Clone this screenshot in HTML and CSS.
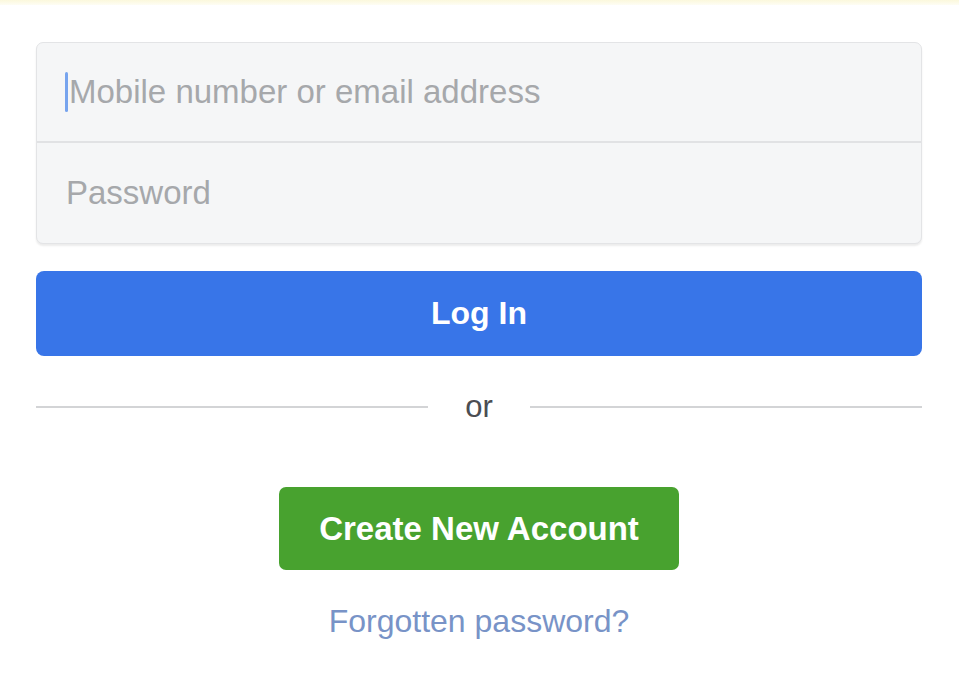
FILE: index.html
```html
<!DOCTYPE html>
<html lang="en">

<head>
    <link rel="stylesheet" href="styles.css">
</head>

<body>
    <div class="notice-strip"></div>
    <main class="login">
        <!-- credential fields -->
        <div class="fields">
            <div class="field field-active">
                <span class="caret"></span>
                <span class="placeholder">Mobile number or email address</span>
            </div>
            <div class="field">
                <span class="placeholder">Password</span>
            </div>
        </div>
        <button class="login-btn">Log In</button>
        <div class="divider">
            <span class="divider-line"></span>
            <span class="divider-text">or</span>
            <span class="divider-line"></span>
        </div>
        <button class="create-btn">Create New Account</button>
        <a class="forgot-link" href="#">Forgotten password?</a>
    </main>
</body>

</html>
```

FILE: styles.css
```css
body {
    margin: 0;
    background: #ffffff;
    font-family: "Liberation Sans", Arial, sans-serif;
}

.notice-strip {
    height: 5px;
    background: linear-gradient(#fbf8dc, #fefdf4);
}

.login {
    display: flex;
    flex-direction: column;
    align-items: center;
    padding: 37px 37px 0 36px;
}

.fields {
    width: 100%;
    box-sizing: border-box;
    background: #f5f6f7;
    border: 1px solid #e3e4e6;
    border-radius: 7px;
    box-shadow: 0 2px 2px rgba(0, 0, 0, 0.08);
}

.field {
    display: flex;
    align-items: center;
    height: 98px;
    padding-left: 29px;
}

.field-active {
    padding-left: 28px;
}

.field + .field {
    border-top: 2px solid #e1e2e4;
    height: 100px;
}

.caret {
    display: inline-block;
    width: 3px;
    height: 40px;
    margin-right: 1px;
    border-radius: 2px;
    background: #77a4ee;
}

.placeholder {
    font-size: 33px;
    color: #a6a8ab;
}

.login-btn {
    width: 100%;
    height: 85px;
    margin-top: 27px;
    border: none;
    border-radius: 8px;
    background: #3875e8;
    color: #ffffff;
    font-family: inherit;
    font-size: 32px;
    font-weight: bold;
}

.divider {
    display: flex;
    align-items: center;
    width: 100%;
    height: 40px;
    margin-top: 31px;
}

.divider-line {
    flex: 1;
    height: 2px;
    background: #d3d4d6;
}

.divider-text {
    padding: 0 37px;
    font-size: 31px;
    color: #4b4d52;
}

.create-btn {
    width: 400px;
    height: 83px;
    margin-top: 60px;
    border: none;
    border-radius: 7px;
    background: #48a22f;
    color: #ffffff;
    font-family: inherit;
    font-size: 33px;
    font-weight: bold;
}

.forgot-link {
    margin-top: 31px;
    line-height: 40px;
    font-size: 32px;
    color: #7893c7;
    text-decoration: none;
}
```
